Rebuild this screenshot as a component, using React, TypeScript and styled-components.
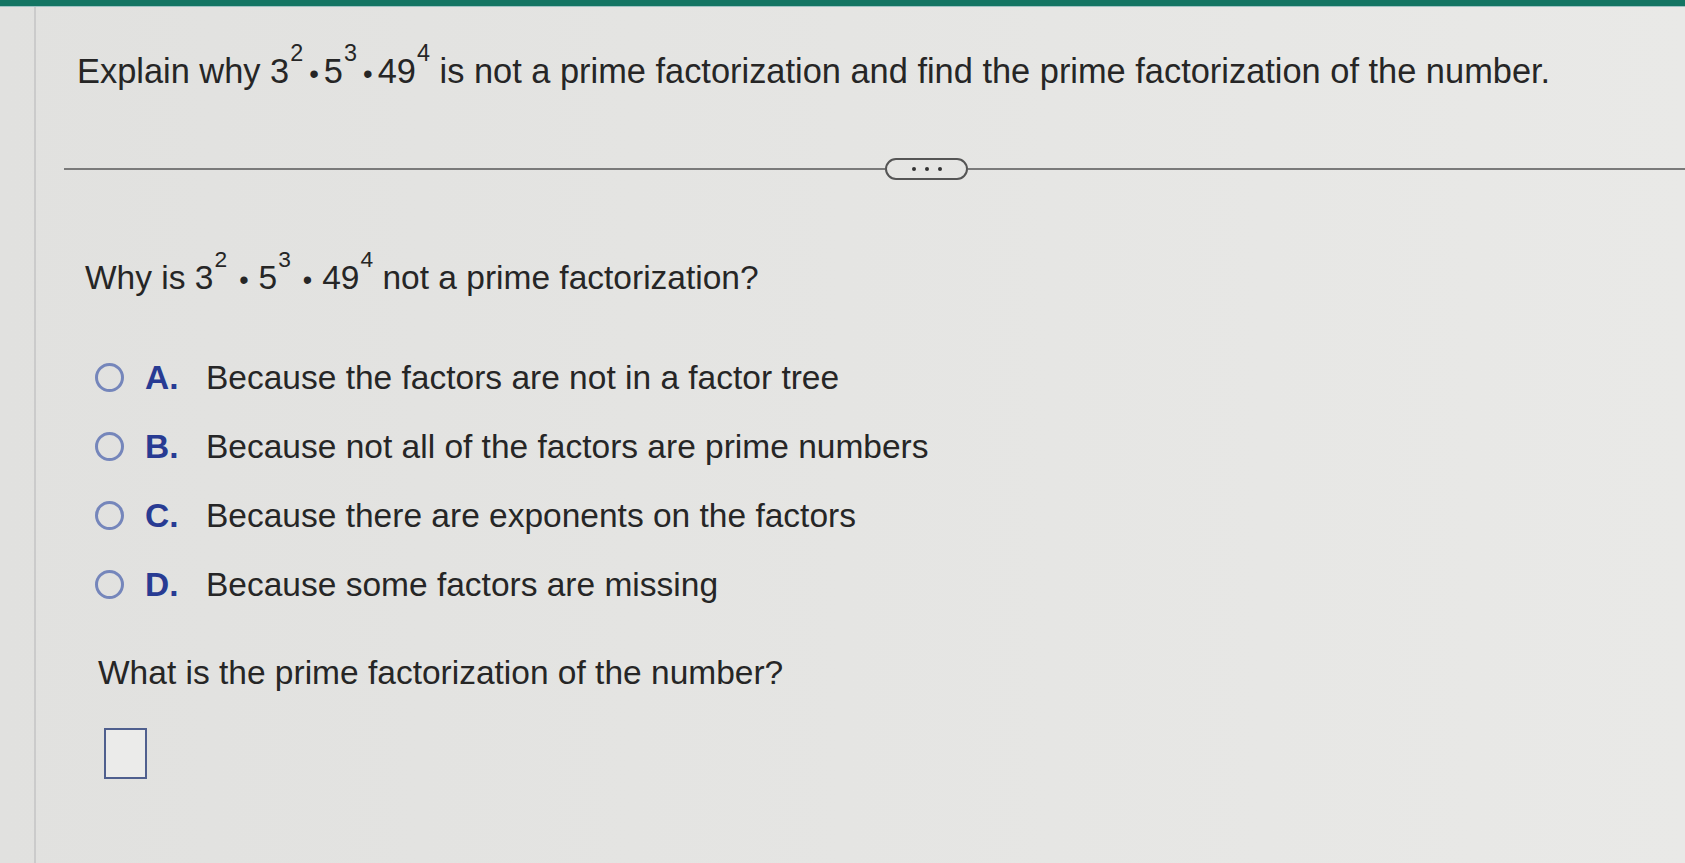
import React from 'react';
import styled, { createGlobalStyle } from 'styled-components';

const GlobalStyle = createGlobalStyle`
  html, body {
    margin: 0;
    padding: 0;
  }
  body {
    background: #e4e4e2;
    font-family: 'Liberation Sans', Arial, sans-serif;
    color: #262626;
  }
`;

const Page = styled.div`
  min-height: 863px;
  display: flex;
  flex-direction: column;
  background: linear-gradient(90deg, #e1e1df 0%, #e5e5e3 50%, #e9e9e7 100%);
`;

const TopBar = styled.div`
  height: 6px;
  background: #147563;
  border-bottom: 1px solid #9fc3c4;
`;

const Frame = styled.div`
  flex: 1;
  margin-left: 34px;
  border-left: 2px solid #cbcbcb;
  display: flex;
  flex-direction: column;
`;

const Title = styled.div`
  margin-top: 44px;
  padding-left: 41px;
  font-size: 34.4px;
  line-height: 40px;
  white-space: nowrap;
`;

const Sup = styled.sup`
  font-size: 0.68em;
  line-height: 0;
  vertical-align: baseline;
  position: relative;
  top: -0.95em;
  margin-left: 1px;
`;

const Dot = styled.span<{ $tight?: boolean }>`
  display: inline-block;
  margin: ${p => (p.$tight ? '0 5px 0 6px' : '0 10px 0 12px')};
  font-size: 0.8em;
`;

const DividerRow = styled.div`
  margin-top: 64px;
  margin-left: 28px;
  display: flex;
  align-items: center;
  height: 22px;
`;

const Rule = styled.div<{ $width?: number }>`
  height: 2px;
  background: #7a7a7a;
  ${p => (p.$width ? `width: ${p.$width}px;` : 'flex: 1;')}
`;

const MorePill = styled.div`
  width: 83px;
  height: 22px;
  box-sizing: border-box;
  border: 2px solid #555;
  border-radius: 11px;
  display: flex;
  align-items: center;
  justify-content: center;
  gap: 9px;
`;

const PillDot = styled.span`
  width: 4px;
  height: 4px;
  border-radius: 50%;
  background: #333;
`;

const Question = styled.div`
  padding-left: 49px;
  display: flex;
  flex-direction: column;
`;

const Prompt = styled.div<{ $indent?: number; $top: number }>`
  margin-top: ${p => p.$top}px;
  margin-left: ${p => p.$indent || 0}px;
  font-size: 33.5px;
  line-height: 40px;
  white-space: nowrap;
`;

const Options = styled.div`
  margin-top: 43px;
  margin-left: 10px;
  display: flex;
  flex-direction: column;
`;

const OptionRow = styled.label`
  height: 69px;
  display: flex;
  align-items: center;
  font-size: 33.5px;
  white-space: nowrap;
`;

const Radio = styled.span`
  width: 29px;
  height: 29px;
  box-sizing: border-box;
  border: 3px solid #7586bb;
  border-radius: 50%;
  margin-right: 21px;
  flex: none;
`;

const Letter = styled.span`
  width: 61px;
  font-weight: 700;
  color: #283b93;
`;

const AnswerBox = styled.div`
  margin-top: 35px;
  margin-left: 19px;
  width: 43px;
  height: 51px;
  box-sizing: border-box;
  border: 2.5px solid #4f5f8e;
  background: #ebebea;
`;

const Expr: React.FC<{ tight?: boolean }> = ({ tight }) => (
  <>
    3<Sup>2</Sup>
    <Dot $tight={tight}>•</Dot>5<Sup>3</Sup>
    <Dot $tight={tight}>•</Dot>49<Sup>4</Sup>
  </>
);

const options = [
  { key: 'A.', text: 'Because the factors are not in a factor tree' },
  { key: 'B.', text: 'Because not all of the factors are prime numbers' },
  { key: 'C.', text: 'Because there are exponents on the factors' },
  { key: 'D.', text: 'Because some factors are missing' },
];

const App: React.FC = () => {
  return (
    <Page>
      <GlobalStyle />
      <TopBar />
      <Frame>
        <Title>
          Explain why <Expr tight /> is not a prime factorization and find the prime factorization of the number.
        </Title>

        <DividerRow>
          <Rule $width={821} />
          <MorePill>
            <PillDot />
            <PillDot />
            <PillDot />
          </MorePill>
          <Rule />
        </DividerRow>

        <Question>
          <Prompt $top={78}>
            Why is <Expr /> not a prime factorization?
          </Prompt>

          <Options>
            {options.map(o => (
              <OptionRow key={o.key}>
                <Radio />
                <Letter>{o.key}</Letter>
                {o.text}
              </OptionRow>
            ))}
          </Options>

          <Prompt $top={34} $indent={13}>
            What is the prime factorization of the number?
          </Prompt>

          <AnswerBox />
        </Question>
      </Frame>
    </Page>
  );
};

export default App;
